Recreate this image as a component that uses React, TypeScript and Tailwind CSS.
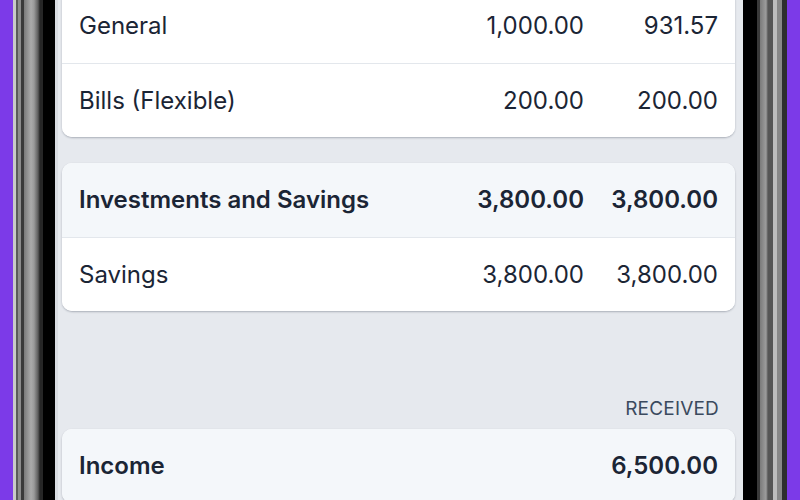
import React from "react";

type Row = { label: string; a?: string; b: string; header?: boolean };

const topCard: Row[] = [
  { label: "General", a: "1,000.00", b: "931.57" },
  { label: "Bills (Flexible)", a: "200.00", b: "200.00" },
];

const savingsCard: Row[] = [
  { label: "Investments and Savings", a: "3,800.00", b: "3,800.00", header: true },
  { label: "Savings", a: "3,800.00", b: "3,800.00" },
];

const incomeCard: Row[] = [{ label: "Income", b: "6,500.00", header: true }];

function BudgetRow({ row, first }: { row: Row; first: boolean }) {
  return (
    <div
      className={`flex h-[74px] items-center pl-[17px] pr-[17px] ${
        first ? "" : "border-t border-[#e3e7ec]"
      } ${row.header ? "bg-[#f4f7fa] font-semibold" : "bg-white font-normal"}`}
    >
      <span className="flex-1 whitespace-nowrap">{row.label}</span>
      {row.a !== undefined && <span className="w-[134px] text-right">{row.a}</span>}
      <span className="w-[134px] text-right">{row.b}</span>
    </div>
  );
}

function Card({ rows, className = "" }: { rows: Row[]; className?: string }) {
  return (
    <div
      className={`overflow-hidden rounded-[10px] bg-white shadow-[0_1px_2px_rgba(30,41,59,0.3)] ${className}`}
    >
      {rows.map((r, i) => (
        <BudgetRow key={r.label} row={r} first={i === 0} />
      ))}
    </div>
  );
}

export default function App() {
  return (
    <div
      className="flex h-[500px] w-[800px] overflow-hidden bg-[#7c3ae8]"
      style={{ fontFamily: "Inter, 'Noto Sans', sans-serif" }}
    >
      {/* phone bezel, left */}
      <div className="h-full w-[55px] shrink-0 bg-[linear-gradient(to_right,#7c3ae8_0_13px,#c9c9c9_13px_16px,#5a5a5a_16px_18px,#8c8c8c_18px_21px,#3a3a3a_21px_24px,#7a7a7a_24px,#ababab_31px,#9a9a9a_34px,#5e5e5e_38px,#262626_40px_43px,#000_43px_55px)]" />

      {/* screen */}
      <div className="h-full w-[688px] shrink-0 overflow-hidden border-l-[3px] border-[#d9dce2] bg-[#e6e9ee] pl-[4px] pr-[8px] text-[24px] leading-[30px] text-[#1b2535]">
        <Card rows={topCard} className="-mt-[11px]" />
        <Card rows={savingsCard} className="mt-[26px]" />
        <div className="mt-[86px] pr-[16px] text-right text-[19px] leading-[24px] tracking-[0.01em] text-[#3b4a5e]">
          RECEIVED
        </div>
        <Card rows={incomeCard} className="mt-[8px]" />
      </div>

      {/* phone bezel, right */}
      <div className="h-full w-[57px] shrink-0 bg-[linear-gradient(to_right,#000_0_14px,#3a3a3a_14px_17px,#7a7a7a_17px,#9c9c9c_23px,#555_25px_30px,#bdbdbd_30px_34px,#888_34px_39px,#2e2e2e_39px_44px,#7c3ae8_44px_57px)]" />
    </div>
  );
}
